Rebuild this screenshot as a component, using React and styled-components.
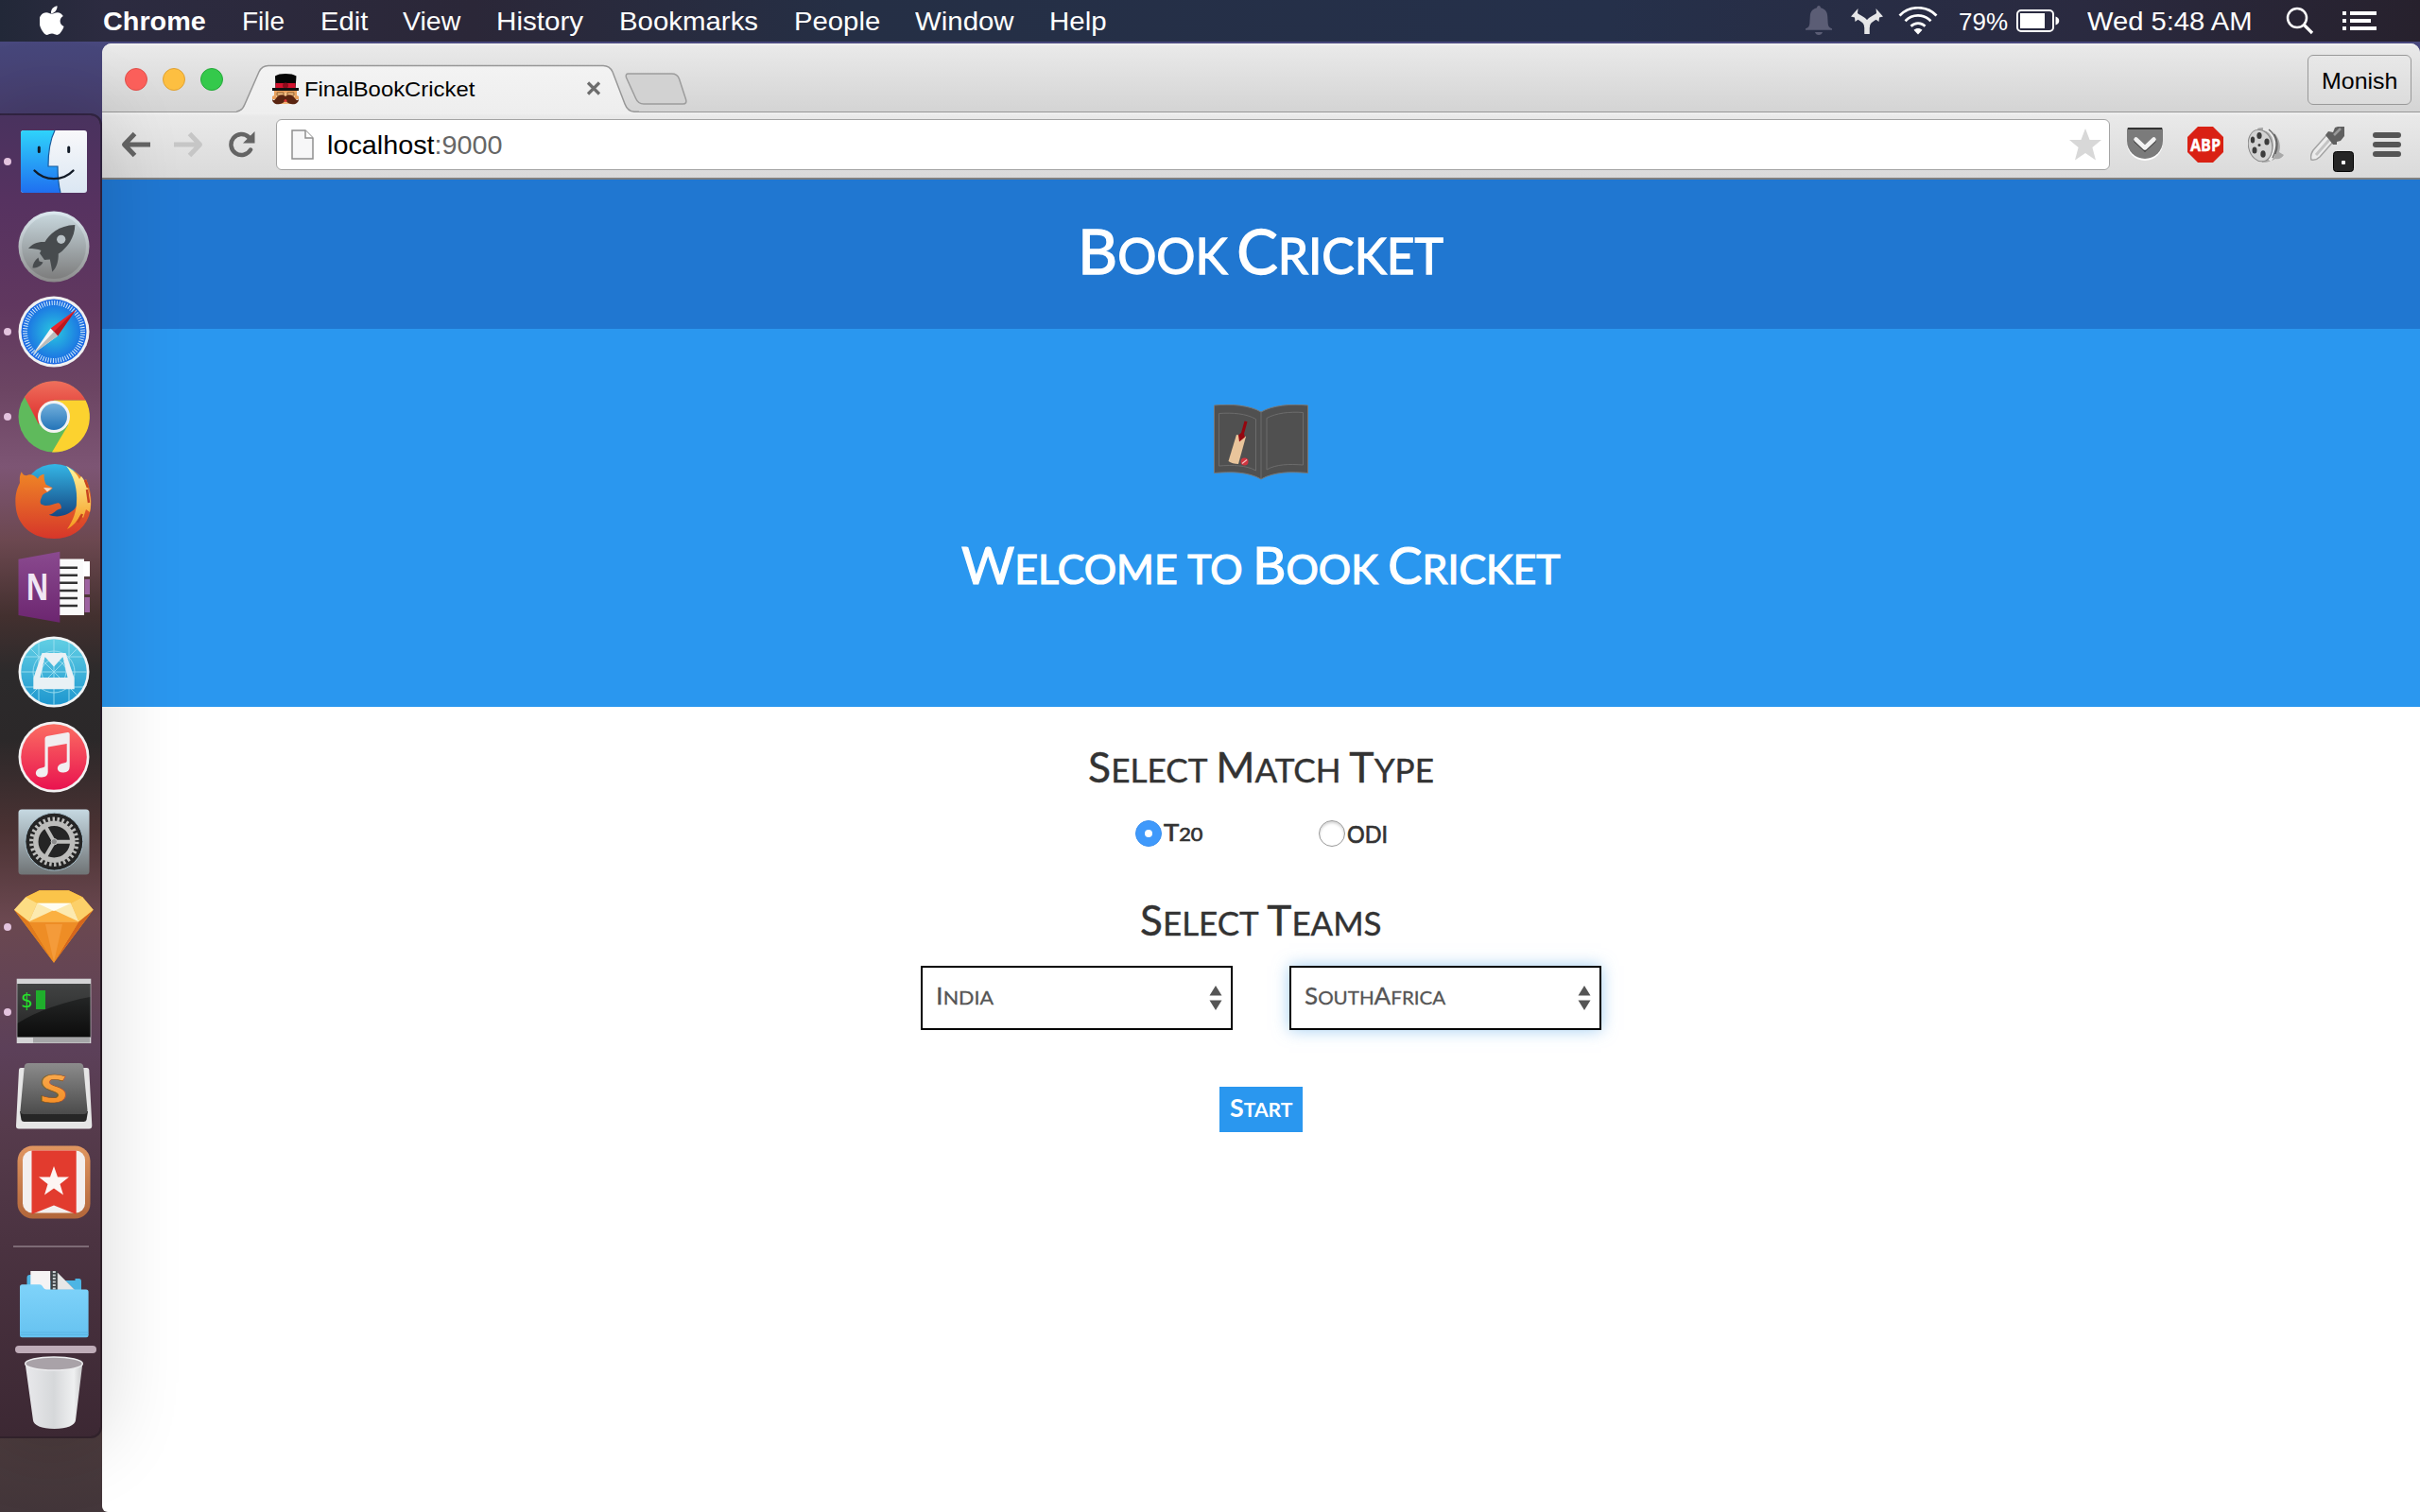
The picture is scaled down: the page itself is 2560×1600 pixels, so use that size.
import React, { useLayoutEffect, useRef, useState } from "react";
import styled, { createGlobalStyle } from "styled-components";

const Global = createGlobalStyle`
  * { box-sizing: border-box; }
  body { margin: 0; overflow: hidden; font-family: "Liberation Sans", Arial, sans-serif; }
  svg { display: block; flex: none; }
`;

/* ---------- text helpers ---------- */

const FitBox = styled.span`
  display: block;
  flex: none;
  width: ${(p) => p.$w}px;
  white-space: nowrap;
`;
const FitInner = styled.span`
  display: inline-block;
  transform-origin: 0 50%;
  vertical-align: top;
`;

/* Condenses or widens a label so it occupies exactly w pixels. */
function Fit({ w, children }) {
  const ref = useRef(null);
  const [k, setK] = useState(1);
  useLayoutEffect(() => {
    const measure = () => ref.current && setK(w / ref.current.offsetWidth);
    measure();
    document.fonts?.ready.then(measure);
  }, [w]);
  return (
    <FitBox $w={w}>
      <FitInner ref={ref} style={{ transform: `scaleX(${k})` }}>{children}</FitInner>
    </FitBox>
  );
}

const Word = styled.span`
  display: inline-block;
  vertical-align: top;
  font-size: 0.79em;
  text-transform: uppercase;
  &::first-letter { font-size: ${(p) => (p.$small ? "1em" : "1.266em")}; line-height: 0; }
`;
const Caps = ({ text }) =>
  text.split(" ").map((w, i) => (
    <React.Fragment key={i}>
      {i > 0 && " "}
      {w.split("|").map((part) => (
        <Word key={part} $small={part[0] !== part[0].toUpperCase()}>{part}</Word>
      ))}
    </React.Fragment>
  ));

/* ---------- desktop ---------- */

const Desktop = styled.div`
  width: 2560px;
  height: 1600px;
  display: flex;
  flex-direction: column;
  overflow: hidden;
  background: linear-gradient(#565090 0, #47477b 50px, #473d6c 120px, #30252c 900px, #4b3b3d 1520px, #43363a 1600px);
`;

const MenuBar = styled.header`
  height: 44px;
  flex: none;
  display: flex;
  align-items: center;
  padding: 0 46px 0 42px;
  color: #fff;
  font-size: 28px;
  line-height: 44px;
  background: linear-gradient(90deg, #222838, #2c2b40 110px, #2b2738 500px, #252f45 900px, #25304a 1700px, #2a2a40 2200px, #27212d);
`;
const MenuItem = styled.span`
  margin-left: ${(p) => p.$gap}px;
  padding-top: 1px;
  font-weight: ${(p) => (p.$bold ? 700 : 400)};
  font-size: ${(p) => p.$size || 28}px;
`;
const Slot = styled.span`
  margin-left: ${(p) => p.$gap}px;
  padding-top: ${(p) => p.$drop || 0}px;
`;
const Spacer = styled.div`
  flex: 1;
`;

const Workspace = styled.div`
  flex: 1;
  display: flex;
  min-height: 0;
`;
const DockRail = styled.aside`
  width: 108px;
  flex: none;
  padding-top: 76px;
  z-index: 2;
`;
const DockPanel = styled.nav`
  height: 1402px;
  display: flex;
  flex-direction: column;
  padding-top: 4px;
  border: 2px solid rgba(30, 15, 30, 0.55);
  border-left: 0;
  border-radius: 0 12px 12px 0;
  background-clip: padding-box;
  box-shadow: 0 0 86px rgba(0, 0, 0, 0.16);
  background-color: #2c2028;
  background-image: linear-gradient(#49325e 0, #563260 90px, #60375f 200px, #6c4563 290px, #7d5574 372px, #6c4850 450px, #43302f 530px, #2c2a2b 590px, #2b2829 660px, #4a3233 755px, #6b4850 850px, #5c4059 990px, #563b4c 1070px, #4b3341 1190px, #3c2833 1400px);
`;
const DockCell = styled.div`
  display: grid;
  grid-template-columns: 12px 90px;
  align-items: center;
  height: ${(p) => p.$h || 90}px;
  flex: none;
`;
const Running = styled.i`
  width: 8px;
  height: 8px;
  margin-left: 4px;
  border-radius: 50%;
  background: ${(p) => (p.$on ? "#e3c3de" : "transparent")};
`;
const DockRule = styled.div`
  height: 2px;
  width: 80px;
  margin: 22px 0 15px 14px;
  flex: none;
  background: #7d6a75;
`;
const FolderBar = styled.div`
  height: 8px;
  width: 86px;
  margin: -1px 0 0 16px;
  flex: none;
  border-radius: 4px;
  background: #bfacb8;
`;

/* ---------- browser ---------- */

const BrowserWindow = styled.main`
  flex: 1;
  margin-top: 2px;
  display: flex;
  flex-direction: column;
  min-width: 0;
  background: #fff;
  border-radius: 10px 10px 0 6px;
  overflow: hidden;
`;
const TitleBar = styled.div`
  height: 73px;
  flex: none;
  display: flex;
  padding: 0 9px 0 24px;
  border-bottom: 1.5px solid #979797;
  background: linear-gradient(#f4f4f4, #e9e9e9 3px, #d4d4d4);
`;
const Lights = styled.div`
  display: flex;
  gap: 16px;
  padding-top: 26px;
  width: 118px;
`;
const Light = styled.i`
  width: 24px;
  height: 24px;
  border-radius: 50%;
  background: ${(p) => p.$c};
  border: 1px solid ${(p) => p.$b};
`;
const Tab = styled.div`
  position: relative;
  width: 426px;
  height: 51px;
  margin-top: 22px;
  flex: none;
  display: flex;
  align-items: flex-start;
  padding: 10px 0 0 38px;
  font-size: 22px;
  line-height: 30px;
  color: #000;
`;
const TabShape = styled.svg`
  position: absolute;
  left: 0;
  top: 0;
`;
const TabTitle = styled.div`
  position: relative;
  width: 304px;
  padding: 2px 0 0 6px;
`;
const TabIcon = styled.div`
  position: relative;
`;
const NewTab = styled.div`
  margin-top: 31px;
  margin-left: -15px;
`;
const Profile = styled.div`
  width: 110px;
  height: 53px;
  margin-top: 12px;
  display: flex;
  justify-content: center;
  border: 1.5px solid #999;
  border-radius: 6px;
  font-size: 24px;
  line-height: 53px;
  color: #000;
  background: linear-gradient(#e8e8e8, #dcdcdc);
`;
const Toolbar = styled.div`
  height: 71px;
  flex: none;
  display: flex;
  align-items: center;
  padding: 0 20px 1px 20px;
  border-bottom: 2px solid #808080;
  background: linear-gradient(#f0f0f0, #e9e9e9 4px, #dadada);
`;
const Omnibox = styled.div`
  width: 1940px;
  height: 54px;
  margin-left: 22px;
  display: flex;
  align-items: center;
  padding: 0 8px 0 15px;
  border: 1.5px solid #a4a4a4;
  border-radius: 6px;
  background: #fff;
  font-size: 28px;
  line-height: 50px;
  color: #000;
`;
const Port = styled.span`
  color: #666;
`;

/* ---------- page ---------- */

const Page = styled.div`
  flex: 1;
  font-family: Lato, "Open Sans", sans-serif;
  display: flex;
  flex-direction: column;
  align-items: stretch;
`;
const PageHeader = styled.div`
  height: 158px;
  padding: 40px 2px 0 0;
  display: flex;
  justify-content: center;
  background: #2077d1;
`;
const Heading = styled.h1`
  margin: 0;
  display: flex;
  justify-content: center;
  font-size: ${(p) => p.$size}px;
  line-height: ${(p) => p.$line}px;
  height: ${(p) => p.$line}px;
  font-weight: 400;
  word-spacing: ${(p) => p.$words || -0.06}em;
  -webkit-text-stroke: ${(p) => p.$stroke || 0}px currentColor;
  color: ${(p) => p.$color || "#fff"};
`;
const Hero = styled.section`
  height: 400px;
  padding-top: 80px;
  display: flex;
  flex-direction: column;
  align-items: center;
  gap: 64px;
  background: #2a97ef;
`;
const Form = styled.section`
  display: flex;
  flex-direction: column;
  align-items: center;
  padding-top: 42px;
`;
const RadioRow = styled.div`
  display: flex;
  margin: 28px 0 56px;
  height: 28px;
  align-items: center;
  gap: 123px;
`;
const RadioLabel = styled.label`
  display: flex;
  align-items: center;
  gap: 2px;
  font-size: 25.5px;
  line-height: 26px;
  color: #333;
  -webkit-text-stroke: 0.7px #333;
`;
const RadioDot = styled.i`
  width: 28px;
  height: 28px;
  border-radius: 50%;
  display: grid;
  place-items: center;
  background: ${(p) => (p.$on ? "#3f99fb" : "#fff")};
  border: ${(p) => (p.$on ? "1px solid #3b90f0" : "1px solid #999")};
  box-shadow: ${(p) => (p.$on ? "none" : "inset 0 2px 3px rgba(0,0,0,.18)")};
  &::after {
    content: "";
    width: 8px;
    height: 8px;
    border-radius: 50%;
    background: #fff;
  }
`;
const SelectRow = styled.div`
  display: flex;
  gap: 60px;
  margin: 20px 0 60px;
`;
const SelectBox = styled.div`
  width: 330px;
  height: 68px;
  display: flex;
  align-items: center;
  justify-content: space-between;
  padding: 0 9px 0 14px;
  border: 2.5px solid #000;
  background: #fff;
  font-size: 25px;
  line-height: 42px;
  color: #555;
  -webkit-text-stroke: 0.3px #555;
  box-shadow: ${(p) => (p.$focus ? "0 0 16px rgba(102,175,233,.6)" : "none")};
`;
const StartButton = styled.button`
  width: 88px;
  height: 48px;
  padding: 0 2px 0 0;
  border: 0;
  display: flex;
  justify-content: center;
  background: #2a97ef;
  color: #fff;
  font: 700 26px/48px Lato, sans-serif;
`;

/* ---------- menu bar glyphs ---------- */

const Apple = () => (
  <svg width="26" height="32" viewBox="0 0 26 32" fill="#fff">
    <path d="M18.500 .3c.3 2.200-.7 4.200-1.900 5.600-1.200 1.300-2.900 2.200-4.600 2.100-.3-2.100.8-4.200 1.900-5.400C15.100 1.300 17 .4 18.500.3z" />
    <path d="M24.800 11c-2 1.200-3.200 3-3.200 5.300 0 2.700 1.600 4.800 4 5.700-.5 1.600-1.300 3.200-2.300 4.700-1.400 2.100-2.900 4.200-5.100 4.200-2.100 0-2.800-1.300-5.200-1.300s-3.200 1.200-5.200 1.300c-2.200.1-3.800-2.300-5.200-4.400C-.3 22.300-1.800 14.700 1.100 10.500c1.500-2.200 3.700-3.300 6-3.300 2.200 0 3.900 1.400 5.700 1.400 1.700 0 3.400-1.500 6.100-1.400 2.300.1 4.500 1.300 5.900 3.800z" />
  </svg>
);
const Bell = () => (
  <svg width="28" height="32" viewBox="0 0 28 32" fill="#5b5d75">
    <path d="M14 0c1.300 0 2 1 2 2.300 4.500 1 7 4.200 7.200 8.700l.5 8c.3 3 1.600 4.500 4.300 5.300v1.500H0v-1.500c2.700-.8 4-2.300 4.300-5.300l.5-8C5 6.500 7.500 3.300 12 2.300 12 1 12.700 0 14 0zM10 28h8c-.5 2-2 3-4 3s-3.500-1-4-3z" />
  </svg>
);
const Fork = () => (
  <svg width="34" height="27" viewBox="0 0 34 27">
    <g fill="none" stroke="#e6e6e8" strokeWidth="5.500">
      <path d="M17 27v-7c0-6-4-8.500-11-12" />
      <path d="M17 20c0-6 4-8.500 11-12" />
    </g>
    <path d="M0 8.500L7.500 0 7 5l4 4-6.500 5L4 9.500zM34 8.500L26.500 0l.5 5-4 4 6.500 5 .5-4.500z" fill="#e6e6e8" />
  </svg>
);
const Wifi = () => (
  <svg width="42" height="30" viewBox="0 0 42 30" fill="none" stroke="#fff" strokeWidth="2.700">
    <path d="M1.500 9.500C12-1.500 30-1.500 40.500 9.500" />
    <path d="M7.500 15.200c7.500-7.800 19.500-7.800 27 0" />
    <path d="M13.500 20.800c4.300-4.300 10.700-4.300 15 0" />
    <path d="M21 29.500l-4.500-4.700c2.500-2.300 6.500-2.300 9 0z" fill="#fff" stroke="none" />
  </svg>
);
const Battery = () => (
  <svg width="46" height="24" viewBox="0 0 46 24">
    <rect x="1" y="1" width="38" height="22" rx="4" fill="none" stroke="#fff" strokeWidth="2" />
    <rect x="4" y="4" width="26" height="16" fill="#fff" />
    <path d="M41.500 7.500c5 1.500 5 7.500 0 9z" fill="#fff" />
  </svg>
);
const SearchGlyph = () => (
  <svg width="30" height="30" viewBox="0 0 30 30" fill="none" stroke="#fff" strokeWidth="2.500">
    <circle cx="12" cy="12" r="10" />
    <path d="M19 19l9 9" strokeWidth="3.200" />
  </svg>
);
const ListGlyph = () => (
  <svg width="36" height="20" viewBox="0 0 36 20" fill="#fff">
    <path d="M0 0h4v4H0zM8 0h28v4H8zM0 8h4v4H0zM8 8h22v4H8zM0 16h4v4H0zM8 16h28v4H8z" />
  </svg>
);

/* ---------- browser glyphs ---------- */

const Favicon = () => (
  <svg width="28" height="33" viewBox="0 0 28 33">
    <path d="M2 18h24v5l2 1v3H0v-3l2-1z" fill="#e9a15e" />
    <path d="M4 20h20v6H4z" fill="#f6c287" />
    <path d="M3 2.500C7-.8 21-.8 25.500 2.500L24.500 16h-21z" fill="#050505" />
    <path d="M3.500 10h21v5.500h-21z" fill="#d2122e" />
    <circle cx="14" cy="12.500" r="3" fill="#8c0c1c" />
    <path d="M0 15h28v3H0z" fill="#111" />
    <path d="M5 20h7v3H5zM16 20h7v3h-7z" fill="none" stroke="#8a5a2c" />
    <path d="M7 26h14v6H7z" fill="#f0b273" />
    <path d="M14 24c4-3 8-1 10 2s3 2 4 1c0 4-4 6-8 5-4-.5-5-3-6-4-1 1-2 3.500-6 4-4 1-8-1-8-5 1 1 2 2 4-1s6-5 10-2z" fill="#5a2410" />
    <circle cx="14" cy="28.500" r="1.500" fill="#d33" />
  </svg>
);
const CloseIcon = styled.svg`
  position: relative;
`;
const CloseGlyph = () => (
  <CloseIcon width="16" height="30" viewBox="0 0 16 30">
    <path d="M2 9.500l12 12M14 9.500l-12 12" stroke="#6d6d6d" strokeWidth="3.200" />
  </CloseIcon>
);
const Arrow = ({ color, flip }) => (
  <svg width="32" height="28" viewBox="0 0 32 28">
    <path d="M14.500 2.500L3.500 14l11 11.500M4 14h27" transform={flip ? "translate(32 0) scale(-1 1)" : undefined}
      fill="none" stroke={color} strokeWidth="5" strokeLinejoin="round" />
  </svg>
);
const Reload = () => (
  <svg width="28" height="28" viewBox="0 0 28 28">
    <path d="M23 19.500A11 11 0 1 1 21 6" fill="none" stroke="#646464" strokeWidth="4.500" strokeLinecap="round" />
    <path d="M27.500 0v12.500H15z" fill="#646464" />
  </svg>
);
const PageGlyph = () => (
  <svg width="24" height="32" viewBox="0 0 24 32">
    <path d="M1 1h14l8 8v22H1z" fill="#f7f7f8" stroke="#8f8f8f" strokeWidth="1.500" />
    <path d="M15 1v8h8" fill="#fff" stroke="#8f8f8f" strokeWidth="1.500" />
  </svg>
);
const Star = () => (
  <svg width="34" height="34" viewBox="0 0 34 34">
    <path d="M17 0l4.600 12H34l-9.600 8L28 33.500l-11-7.500-11 7.500L9.600 20 0 12h12.400z" fill="#d8d8d8" />
  </svg>
);
const Pocket = () => (
  <svg width="38" height="36" viewBox="0 0 38 36">
    <path d="M2 2h34q2 0 2 2v12a19 19 0 0 1-38 0V4q0-2 2-2z" fill="#fff" />
    <path d="M2 0h34q2 0 2 2v12a19 19 0 0 1-38 0V2q0-2 2-2z" fill="#7b7b7b" />
    <path d="M1 1h36" stroke="#333" strokeWidth="2" />
    <path d="M9.500 14l9.500 9 9.500-9" fill="none" stroke="#444" strokeWidth="4.500" strokeLinecap="round" />
    <path d="M9.500 12.500l9.500 9 9.500-9" fill="none" stroke="#f2f2f2" strokeWidth="4.500" strokeLinecap="round" strokeLinejoin="round" />
  </svg>
);
const AdBlock = () => (
  <svg width="38" height="38" viewBox="0 0 38 38">
    <path d="M11 0h16l11 11v16L27 38H11L0 27V11z" fill="#d92114" />
    <text x="19" y="25.700" textAnchor="middle" textLength="32" lengthAdjust="spacingAndGlyphs" fontFamily="Open Sans, sans-serif" fontWeight="700" fontSize="17.500" fill="#fff" stroke="#fff" strokeWidth=".4">ABP</text>
  </svg>
);
const Reel = () => (
  <svg width="38" height="38" viewBox="0 0 38 38">
    <path d="M10 2C22-3 38 12 33 27l5 3c-2 3-5 5-9 4-3 2-8 4-14 4z" fill="#a9a9a9" />
    <path d="M16 2c13 2 17 20 7 34" fill="none" stroke="#e9e9e9" strokeWidth="3.500" />
    <path d="M22 3c9 7 10 18 4 30M28 8c4 7 4 14 1 21" fill="none" stroke="#666" strokeWidth="1.300" />
    <ellipse cx="13" cy="20" rx="12.500" ry="17" transform="rotate(-12 13 20)" fill="#d3d3d3" stroke="#8a8a8a" />
    <g fill="#3c3c3c">
      <ellipse cx="12" cy="9.500" rx="2.600" ry="3.600" /><ellipse cx="20" cy="16" rx="2.600" ry="3.600" />
      <ellipse cx="5" cy="14" rx="2.200" ry="3.600" /><ellipse cx="7" cy="25" rx="2.500" ry="3.600" />
      <ellipse cx="16" cy="29" rx="2.700" ry="3.800" /><circle cx="12" cy="19.500" r="1.500" />
    </g>
  </svg>
);
const Dropper = () => (
  <svg width="48" height="50" viewBox="0 0 48 50">
    <path d="M1 35c-1-3 0-7 2-10L18 8l7 7-15 17c-2 2-5 4-9 3z" fill="#ececec" stroke="#a3a3a3" strokeWidth="1.500" />
    <path d="M6 30L20 14" stroke="#c4c4c4" strokeWidth="3" />
    <path d="M16 9l3-4 5 1 2-5 3-1h7v10l-4 5-4 1v3l-4 0z" fill="#606060" />
    <path d="M25 9l7-7" stroke="#9a9a9a" strokeWidth="2.500" />
    <rect x="24.500" y="26.500" width="21" height="21" rx="3" fill="#252525" stroke="#000" />
    <rect x="33" y="36" width="4" height="4" rx="1" fill="#fff" />
  </svg>
);
const Burger = () => (
  <svg width="30" height="27" viewBox="0 0 30 27" fill="#555">
    <rect width="30" height="6" rx="3" /><rect y="10" width="30" height="6" rx="3" /><rect y="20" width="30" height="6" rx="3" />
  </svg>
);

/* ---------- page drawings ---------- */

const Book = () => (
  <svg width="100" height="80" viewBox="0 0 100 80">
    <path d="M.5 1C18-1 38 1 50 8 62 1 82-1 99.500 1v71.500C82 71 64 71 50 79 36 71 18 71 .5 72.500z" fill="#505050" stroke="#777" />
    <path d="M50 8v71M5.500 9.500C20 8.500 34 9.500 44.500 15.500V70C34 64 20 64 5.500 65zM94.500 8.500C80 7.500 66 9 56 14.500V69C66 63 80 63 94.500 64z" fill="none" stroke="#6c6c6c" />
    <path d="M24 32l10 2-8 29c-4 0-8-1-10.500-3z" fill="#e9c59b" />
    <path d="M32.500 17.500l3 .8L32 31l1 3.500-6 5-1-7 3-2.500z" fill="#94060f" />
    <circle cx="32.500" cy="60.500" r="4" fill="#cf3540" />
    <path d="M30 62.500l5-4" stroke="#f5c0c0" strokeWidth="1.200" />
  </svg>
);
const Stepper = () => (
  <svg width="14" height="26" viewBox="0 0 14 26" fill="#555">
    <path d="M7 0l6.500 10.500H.5zM7 26L.5 15.500h13z" />
  </svg>
);

/* ---------- dock icons ---------- */

const Icon = ({ h = 90, children }) => (
  <svg width="90" height={h} viewBox={`0 0 90 ${h}`}>{children}</svg>
);
const Grad = ({ id, a, b, r }) =>
  r ? (
    <radialGradient id={id}><stop stopColor={a} /><stop offset="1" stopColor={b} /></radialGradient>
  ) : (
    <linearGradient id={id} x2="0" y2="1"><stop stopColor={a} /><stop offset="1" stopColor={b} /></linearGradient>
  );

const Finder = () => (
  <Icon>
    <defs><Grad id="fa" a="#2fd3fb" b="#1f6ff0" /><Grad id="fb" a="#f8f8fa" b="#dbe7f3" /></defs>
    <rect x="10" y="12" width="70" height="66" rx="3" fill="url(#fb)" />
    <path d="M13 12h33c-5 10-7 23-7 38h10c0 10 1 20 3 28H13q-3 0-3-3V15q0-3 3-3z" fill="url(#fa)" />
    <path d="M46 12c-5 10-7 23-7 38h10c0 10 1 20 3 28" fill="none" stroke="#175a9c" strokeWidth="1.200" />
    <path d="M29.300 30v4.500M60.700 30v4.500" stroke="#111a26" strokeWidth="3" strokeLinecap="round" />
    <path d="M24.500 54.500c11 11.500 30 11.500 41 0" fill="none" stroke="#111a26" strokeWidth="2.400" strokeLinecap="round" />
  </Icon>
);
const Launchpad = () => (
  <Icon>
    <defs><Grad id="la" a="#c7d6dc" b="#7d7d7d" /><Grad id="lb" a="#dce9f0" b="#8b8b8b" /></defs>
    <circle cx="45" cy="45" r="37.500" fill="url(#lb)" />
    <circle cx="45" cy="45" r="34" fill="url(#la)" />
    <path d="M67.300 22c0 9-4 18-10 24-2 2.500-5 5-7.500 6.500 0 8-1.500 14-6.500 19.200-1-5-1.500-9-2.500-13.200L35 59l-5-7 1.500-3c-4-1.500-8-2-13.500-2 4-5 10-7.500 17.500-7C40 32 50 22.500 67.300 22z" fill="#474b4e" />
    <circle cx="52.700" cy="37.300" r="4.600" fill="#b9c2c6" />
    <path d="M28.500 56.500l1 4 4 1c-2 4-6 6-11 6 0-4 2-8 6-11z" fill="#474b4e" />
  </Icon>
);
const Safari = () => (
  <Icon>
    <defs><Grad id="sa" r a="#29c8e0" b="#1a66e3" /></defs>
    <circle cx="45" cy="45" r="37.500" fill="#f1f1f1" />
    <circle cx="45" cy="45" r="34.500" fill="url(#sa)" />
    <circle cx="45" cy="45" r="30.500" fill="none" stroke="#d4ebfb" strokeWidth="5" strokeDasharray="1 1.662" />
    <path d="M68.300 21.700L41.500 41.500 49 49.500z" fill="#e8242c" />
    <path d="M68.300 21.700L45 45l4 4.500z" fill="#b81820" />
    <path d="M23 68.500L41.500 41.500 49 49.500z" fill="#f4f4f4" />
    <path d="M23 68.500L45 45l4 4.500z" fill="#b9bcbc" />
  </Icon>
);
const Chrome = () => (
  <Icon>
    <defs><Grad id="ca" a="#ef6f5c" b="#dd2c2c" /><Grad id="cb" a="#73b0dc" b="#2474b8" /></defs>
    <circle cx="45" cy="45" r="37.500" fill="#5fba5c" />
    <path d="M45 27.500h33.500A37.500 37.500 0 0 1 43 82.500L60 54z" fill="#fcd22f" />
    <path d="M14 24A37.500 37.500 0 0 1 78.500 27.500H45L29 53z" fill="url(#ca)" />
    <circle cx="45" cy="45" r="17" fill="#f3f3f3" />
    <circle cx="45" cy="45" r="14" fill="url(#cb)" />
  </Icon>
);
const Firefox = () => (
  <Icon>
    <defs><Grad id="ga" a="#35b6e6" b="#0d2f6d" /><Grad id="gb" a="#f08a26" b="#d6362a" /><Grad id="gc" a="#fff6a0" b="#f59a1e" /></defs>
    <circle cx="46" cy="39" r="34" fill="url(#ga)" />
    <path d="M10.700 13.300c1.500 3 3 4 5.300 4 4-2 8-1 12 3.500 1-3 4-4.500 6.700-5-.5 4 .5 8 2 11l7 3.500c-2 4-9 5-11 8-1 4-3 5-1.500 9 6 4 12 0 18-1 3 0 4 4 3.500 6-6 1-8 6-13 6.500 10 4 20 0 26-5 8-8 9-24 3-36L61 10c8 3 12 7 16 13l2-2c6 13 7 27 3 39-6 16-20 24-37 24C24 84 8 72 5 53c-2-14 1-22 4-28-.5-5 0-8 1.700-11.700z" fill="url(#gb)" />
    <path d="M58 7c7 4 12 9 14 14l2-3c8 10 12 26 9 38l-4-3-3 9-3-3c-3 6-8 12-14 15 7-10 10-20 10-29 1-14-3-28-11-38z" fill="url(#gc)" />
    <path d="M80 32l2 14M75 58l-5 9M78 22l3 8" stroke="#c8441f" strokeWidth="2.500" />
    <path d="M34 30l9 .5-5 4z" fill="#f3d9c4" />
  </Icon>
);
const OneNote = () => (
  <Icon>
    <defs><Grad id="oa" a="#8a4a8f" b="#6c2670" /></defs>
    <path d="M51 15.500h26V75H51z" fill="#fafafa" />
    <path d="M76 18h7v16h-7z" fill="#fff" />
    <path d="M77.500 37H83v16h-5.500zM77.500 56H83v16h-5.500z" fill="#9c62a0" />
    <path d="M51 24.700h19M51 32.700h19M51 40.700h19M51 49h19M51 57h19M51 65h19" stroke="#333" strokeWidth="2.600" />
    <path d="M7.500 15.700L51.300 7.700v75L7.500 75z" fill="url(#oa)" />
    <text x="27.500" y="59" textAnchor="middle" textLength="24" lengthAdjust="spacingAndGlyphs" fontFamily="Open Sans, sans-serif" fontWeight="700" fontSize="39" fill="#f1e6f4">N</text>
  </Icon>
);
const Mailbox = () => (
  <Icon>
    <defs><Grad id="ma" a="#62cfe4" b="#1e97cf" /></defs>
    <circle cx="45" cy="45" r="37.500" fill="#f1f4f5" />
    <circle cx="45" cy="45" r="34.800" fill="url(#ma)" />
    <g fill="none" stroke="#9fe0f0" strokeWidth=".9">
      <path d="M45 10v70M10 45h70M20 20l50 50M70 20L20 70M29 14v62M61 14v62M14 29h62M14 61h62" />
      <circle cx="45" cy="45" r="13" /><circle cx="45" cy="45" r="22" />
    </g>
    <path fillRule="evenodd" d="M32.500 25h25l9.200 26.700v11.600H23.300V51.700zM35.500 29l-5 22h29l-5-22-9.500 10.500z" fill="#e9f1f5" />
  </Icon>
);
const Music = () => (
  <Icon>
    <defs><Grad id="ia" a="#fb6d62" b="#e9134f" /></defs>
    <circle cx="45" cy="45" r="37.500" fill="#f3f1f2" />
    <circle cx="45" cy="45" r="34.800" fill="url(#ia)" />
    <path d="M35.500 25.500q0-2 2-2.500l22-4q2.200-.3 2.200 2V55q0 6-6.500 6.500c-7 .5-9-7-2-9.500 3-1 5.500-.5 5.500-3V31l-20 3.500V61q0 5-6.500 5.500c-7 .5-9-7-2-9.500 3-1 5.300-.5 5.300-3z" fill="#f1eef0" />
  </Icon>
);
const Settings = () => (
  <Icon>
    <defs><Grad id="ta" a="#c6d9e2" b="#6f7375" /></defs>
    <rect x="7.500" y="10.500" width="75" height="69" rx="3.500" fill="url(#ta)" />
    <circle cx="45.300" cy="44.700" r="30.500" fill="#252525" stroke="#a9c0cc" strokeWidth="1" />
    <g fill="none" stroke="#bdbdbb">
      <circle cx="45.300" cy="44.700" r="24" strokeWidth="4.500" strokeDasharray="2.500 2.527" />
      <circle cx="45.300" cy="44.700" r="19.500" strokeWidth="5.500" />
      <path d="M45.300 44.700h18M45.300 44.700l-9-15.600M45.300 44.700l-9 15.600" strokeWidth="4" />
    </g>
    <circle cx="45.300" cy="44.700" r="3.200" fill="#8b8b8b" stroke="#c8c8c6" />
  </Icon>
);
const Sketch = () => (
  <Icon>
    <path d="M29.700 6.300h31l14.600 7L86.700 26.700 45 82.700 3 26.700l12.300-13.400z" fill="#f4a52e" />
    <path d="M3 26.700L18.700 39.300 45 82.700z" fill="#e07b1d" />
    <path d="M86.700 26.700L71.300 39.300 45 82.700z" fill="#d5661c" />
    <path d="M18.700 39.300h52.600L45 82.700z" fill="#ee8d25" />
    <path d="M36 42l9 40 9-40z" fill="#f49b3a" />
    <path d="M29.700 6.300h31l14.600 7L63 19.700H27.300l-12-6.400z" fill="#fbc44a" />
    <path d="M15.300 13.300l12 6.400-8.600 19.600L3 26.700z" fill="#fddd84" />
    <path d="M75.300 13.300L63 19.700l8.300 19.600 15.400-12.600z" fill="#fcd069" />
    <path d="M27.300 19.700H63l8.300 19.600H18.700z" fill="#fceab0" />
    <path d="M45 27L18.700 39.300h52.600z" fill="#fbb040" />
    <path d="M27.300 19.700H63L45 28z" fill="#fffdf2" />
  </Icon>
);
const Terminal = () => (
  <Icon>
    <defs><Grad id="ea" a="#2c2e2e" b="#0c0c0c" /></defs>
    <rect x="5.700" y="9.700" width="78.600" height="68.300" fill="#d4d4d6" />
    <rect x="6.300" y="15" width="77.400" height="56.500" fill="url(#ea)" />
    <path d="M6.300 15h77.400v14C55 34 27 44 6.300 57z" fill="#fff" opacity=".1" />
    <path d="M23 72h60v5.500H23z" fill="#a6a6a8" />
    <text x="16" y="40" textAnchor="middle" fontFamily="DejaVu Sans Mono, monospace" fontSize="21" fill="#25e32b">$</text>
    <rect x="26" y="22" width="10" height="20" fill="#1fae2c" />
  </Icon>
);
const Sublime = () => (
  <Icon>
    <defs><Grad id="ua" a="#8c8c8c" b="#4b4b4b" /><Grad id="ub" a="#f9b45c" b="#f5861a" /></defs>
    <path d="M10 14h70q2 0 2.300 2l3 59q0 3.500-3 3.500H8q-3.300 0-3-3.500l3-59q.3-2 2-2z" fill="#e6e6e6" />
    <path d="M9 60h72l-1.500 9q-.5 2-3 2h-63q-2.500 0-3-2z" fill="#262626" />
    <path d="M18 9h54q4 0 4.300 4L80.500 59q0 4-4 4h-63q-4.500 0-4-4L13.700 13q.3-4 4.300-4z" fill="url(#ua)" />
    <text x="44.500" y="51" textAnchor="middle" textLength="30" lengthAdjust="spacingAndGlyphs" fontFamily="Open Sans, sans-serif" fontWeight="700" fontSize="42" fill="url(#ub)" stroke="#7b4a1c" strokeWidth=".5">S</text>
  </Icon>
);
const Wunderlist = () => (
  <Icon>
    <defs><Grad id="wa" a="#e09660" b="#b2663a" /></defs>
    <rect x="6.500" y="6.500" width="77" height="77" rx="16" fill="url(#wa)" />
    <rect x="12" y="11.500" width="66" height="66" rx="10" fill="#f3efee" />
    <path d="M21.500 11.500h47.200V79L45 69.500 21.500 79z" fill="#e23b2e" />
    <path d="M45 28l4 11.500h12L51.500 47l3.500 11.500L45 51.500l-10 7L38.500 47 29 39.500h12z" fill="#fdf5f3" />
  </Icon>
);
const Folder = () => (
  <Icon>
    <defs><Grad id="da" a="#7fd3fa" b="#66c2f0" /></defs>
    <path d="M16.500 17q0-3 3-3h3v6h45v-2h4q2.500 0 2.500 3v12H16.500z" fill="#4db5e4" />
    <path d="M20.300 10h21v24h-21z" fill="#f5f3f4" />
    <path d="M41.500 10H49v24h-7.500z" fill="#3c4144" />
    <path d="M45.300 10v20" stroke="#c9ced0" strokeWidth="3" strokeDasharray="2 1.500" />
    <path d="M49 12l18 18H49z" fill="#e7e7e7" stroke="#bbb" strokeWidth=".6" />
    <path d="M11.500 24.300H30q2 0 3 2l1 1.500q1 1.600 3 1.600h42q2.600 0 2.600 2.600v46q0 2.300-2.300 2.300h-68Q9 80.300 9 78V27q0-2.700 2.500-2.700z" fill="url(#da)" />
    <path d="M9.500 75h72M9.500 77.500h72" stroke="#56b0de" strokeWidth=".7" />
  </Icon>
);
const Trash = () => (
  <Icon h={86}>
    <defs>
      <linearGradient id="ra"><stop stopColor="#e9e9ec" /><stop offset=".5" stopColor="#d6d8da" /><stop offset=".85" stopColor="#eff0f1" /><stop offset="1" stopColor="#c8c8ca" /></linearGradient>
    </defs>
    <path d="M14.700 11L23 71c.5 5 9 9 22.500 9S67.500 76 68 71l7.300-60z" fill="url(#ra)" />
    <ellipse cx="45" cy="11" rx="30.300" ry="7" fill="#a9a2a8" stroke="#ececee" strokeWidth="1.500" />
  </Icon>
);

const dockApps = [
  [Finder, true], [Launchpad], [Safari, true], [Chrome, true], [Firefox], [OneNote], [Mailbox],
  [Music], [Settings], [Sketch, true], [Terminal, true], [Sublime], [Wunderlist],
];
const menus = [
  ["File", 38, 45], ["Edit", 38, 50], ["View", 37, 61], ["History", 38, 92],
  ["Bookmarks", 38, 147], ["People", 38, 91], ["Window", 37, 105], ["Help", 37, 61],
];

export default function App() {
  return (
    <Desktop>
      <Global />
      <MenuBar>
        <Apple />
        <MenuItem $gap={41} $bold><Fit w={109}>Chrome</Fit></MenuItem>
        {menus.map(([label, gap, w]) => (
          <MenuItem key={label} $gap={gap}><Fit w={w}>{label}</Fit></MenuItem>
        ))}
        <Spacer />
        <Bell />
        <Slot $gap={20}><Fork /></Slot>
        <Slot $gap={16}><Wifi /></Slot>
        <MenuItem $gap={22} $size={25}><Fit w={52}>79%</Fit></MenuItem>
        <Slot $gap={9}><Battery /></Slot>
        <MenuItem $gap={29}><Fit w={175}>Wed 5:48 AM</Fit></MenuItem>
        <Slot $gap={35}><SearchGlyph /></Slot>
        <Slot $gap={30}><ListGlyph /></Slot>
      </MenuBar>
      <Workspace>
        <DockRail>
          <DockPanel>
            {dockApps.map(([Art, on], i) => (
              <DockCell key={i}><Running $on={on} /><Art /></DockCell>
            ))}
            <DockRule />
            <DockCell><Running /><Folder /></DockCell>
            <FolderBar />
            <DockCell $h={86}><Running /><Trash /></DockCell>
          </DockPanel>
        </DockRail>
        <BrowserWindow>
          <TitleBar>
            <Lights>
              <Light $c="#fc605b" $b="#e0504b" />
              <Light $c="#fdbf41" $b="#dfa134" />
              <Light $c="#34c94b" $b="#25a93a" />
            </Lights>
            <Tab>
              <TabShape width="426" height="51" viewBox="0 0 426 51">
                <defs><Grad id="tab" a="#f3f3f3" b="#eeeeee" /></defs>
                <path d="M0 51V50.200q6-.5 9-8L24 8q3-6.500 10-6.500h354q7 0 10 6.500l13 34q3 8 10 8.200V51z" fill="url(#tab)" />
                <path d="M0 50.200q6-.5 9-8L24 8q3-6.500 10-6.500h354q7 0 10 6.500l13 34q3 8 10 8.200h5" fill="none" stroke="#979797" strokeWidth="1.500" />
              </TabShape>
              <TabIcon><Favicon /></TabIcon>
              <TabTitle><Fit w={180}>FinalBookCricket</Fit></TabTitle>
              <CloseGlyph />
            </Tab>
            <NewTab>
              <svg width="66" height="34" viewBox="0 0 66 34">
                <path d="M3.500 1h46q6 0 8 5.500L64.500 28q1.500 5-3 5H20q-6 0-8.500-6L1.500 5q-1-4 2-4z" fill="#d2d2d2" stroke="#9c9c9c" strokeWidth="1.500" />
              </svg>
            </NewTab>
            <Spacer />
            <Profile><Fit w={80}>Monish</Fit></Profile>
          </TitleBar>
          <Toolbar>
            <Arrow color="#646464" />
            <Slot $gap={23}><Arrow color="#c6c6c6" flip /></Slot>
            <Slot $gap={27}><Reload /></Slot>
            <Omnibox>
              <PageGlyph />
              <Slot $gap={14} $drop={2}><Fit w={186}>localhost<Port>:9000</Port></Fit></Slot>
              <Spacer />
              <Star />
            </Omnibox>
            <Slot $gap={18}><Pocket /></Slot>
            <Slot $gap={26}><AdBlock /></Slot>
            <Slot $gap={26}><Reel /></Slot>
            <Slot $gap={28} $drop={12}><Dropper /></Slot>
            <Slot $gap={18}><Burger /></Slot>
          </Toolbar>
          <Page>
            <PageHeader>
              <Heading $size={65.5} $line={80} $stroke={1.3} $words={-0.11}><Fit w={387}><Caps text="Book Cricket" /></Fit></Heading>
            </PageHeader>
            <Hero>
              <Book />
              <Heading as="h2" $size={54.5} $line={60} $stroke={1.2}><Fit w={634}><Caps text="Welcome to Book Cricket" /></Fit></Heading>
            </Hero>
            <Form>
              <Heading as="h3" $size={43.5} $line={50} $stroke={0.4} $color="#333"><Fit w={366}><Caps text="Select Match Type" /></Fit></Heading>
              <RadioRow>
                <RadioLabel><RadioDot $on /><Fit w={41}><Caps text="T20" /></Fit></RadioLabel>
                <RadioLabel><RadioDot /><Fit w={43}>ODI</Fit></RadioLabel>
              </RadioRow>
              <Heading as="h3" $size={43.5} $line={50} $stroke={0.4} $color="#333"><Fit w={256}><Caps text="Select Teams" /></Fit></Heading>
              <SelectRow>
                <SelectBox><Fit w={61}><Caps text="India" /></Fit><Stepper /></SelectBox>
                <SelectBox $focus><Fit w={149}><Caps text="South|Africa" /></Fit><Stepper /></SelectBox>
              </SelectRow>
              <StartButton><Fit w={67}><Caps text="Start" /></Fit></StartButton>
            </Form>
          </Page>
        </BrowserWindow>
      </Workspace>
    </Desktop>
  );
}
